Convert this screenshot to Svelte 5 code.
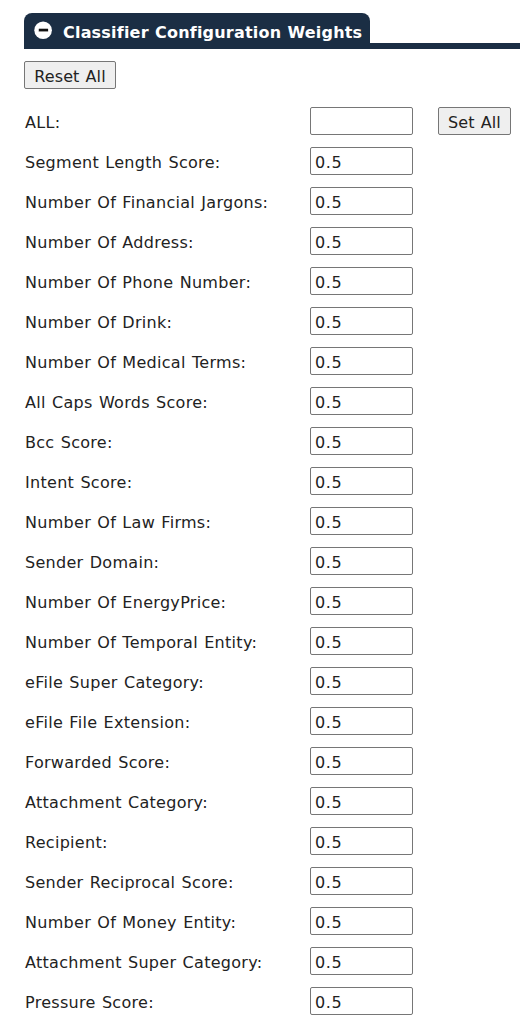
<script>
  let weights = $state([
    'Segment Length Score', 'Number Of Financial Jargons', 'Number Of Address',
    'Number Of Phone Number', 'Number Of Drink', 'Number Of Medical Terms',
    'All Caps Words Score', 'Bcc Score', 'Intent Score', 'Number Of Law Firms',
    'Sender Domain', 'Number Of EnergyPrice', 'Number Of Temporal Entity',
    'eFile Super Category', 'eFile File Extension', 'Forwarded Score',
    'Attachment Category', 'Recipient', 'Sender Reciprocal Score',
    'Number Of Money Entity', 'Attachment Super Category', 'Pressure Score'
  ].map((name) => ({ name, value: '0.5' })));
  let all = $state('');

  function reset() {
    weights.forEach((w) => (w.value = '0.5'));
  }
  function setAll() {
    weights.forEach((w) => (w.value = all));
  }
</script>

<main>
  <header>
    <h2>
      <svg width="18" height="18" viewBox="0 0 18 18" aria-hidden="true">
        <circle cx="9.1" cy="9.2" r="8.8" fill="#fff" />
        <rect x="4.6" y="7.6" width="9.6" height="3.2" rx="0.5" fill="#777" />
        <rect x="5" y="8" width="9" height="2" fill="#111" />
      </svg>
      <span>Classifier Configuration Weights</span>
    </h2>
  </header>
  <button class="reset" onclick={reset}><span>Reset All</span></button>
  <div class="rows">
    <div class="row">
      <label for="all">ALL:</label>
      <input id="all" bind:value={all} />
      <button class="set" onclick={setAll}><span>Set All</span></button>
    </div>
    {#each weights as w, i}
      <div class="row">
        <label for="w{i}">{w.name}:</label>
        <input id="w{i}" bind:value={w.value} />
      </div>
    {/each}
  </div>
</main>

<style>
  :global(body) { background: #fff; overflow: hidden; }
  main {
    box-sizing: border-box;
    height: 1021px;
    overflow: hidden;
    padding: 13px 0 0 24px;
    font: 16px/20px Verdana, "DejaVu Sans", sans-serif;
    letter-spacing: 0.29px;
    word-spacing: 0.9px;
    color: #222;
  }
  header { height: 30px; border-bottom: 6px solid #1b2e44; }
  h2 {
    box-sizing: border-box;
    display: flex;
    align-items: flex-start;
    width: 346px;
    height: 30px;
    margin: 0;
    padding: 8px 0 0 10px;
    border-radius: 8px 8px 0 0;
    background: #1b2e44;
    color: #fff;
    font-size: 16px;
    line-height: 20px;
    letter-spacing: 0.2px;
    word-spacing: 0.5px;
    white-space: nowrap;
  }
  h2 svg { flex: none; margin: 0 11px 0 0; }
  h2 span { padding-top: 2px; }
  button, input {
    box-sizing: border-box;
    height: 28px;
    margin: 0;
    border: 1px solid #767676;
    border-radius: 2px;
    font: inherit;
    letter-spacing: inherit;
    word-spacing: inherit;
    color: #222;
  }
  button { display: block; padding: 2px 0 0; background: #efefef; letter-spacing: 0.1px; white-space: nowrap; }
  button span { display: block; padding-top: 1px; }
  .reset { width: 92px; margin-top: 12px; }
  .set { width: 73px; margin-left: 25px; }
  .rows { padding-top: 18px; }
  .row { display: flex; height: 28px; margin-bottom: 12px; }
  label { width: 285px; padding: 6px 0 0 1px; box-sizing: border-box; margin-right: 1px; white-space: nowrap; }
  input { width: 103px; padding: 2px 4px 0; background: #fff; outline: 0; letter-spacing: 0.6px; }
</style>
